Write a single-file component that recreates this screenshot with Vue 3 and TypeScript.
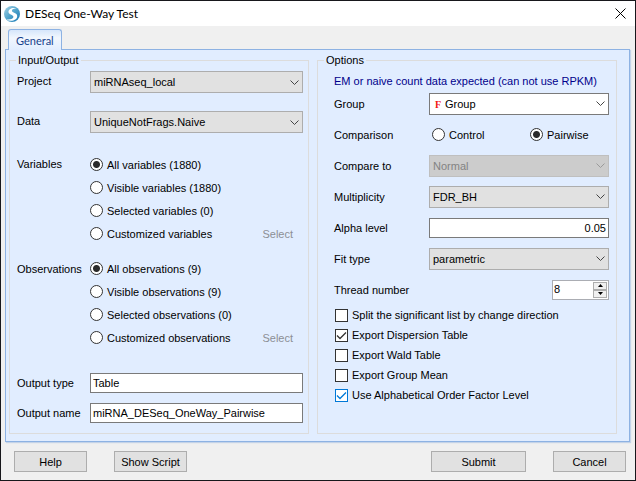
<script setup lang="ts">
import { reactive } from 'vue'

interface Choice {
  value: string
  label: string
}

const variableChoices: Choice[] = [
  { value: 'all', label: 'All variables (1880)' },
  { value: 'visible', label: 'Visible variables (1880)' },
  { value: 'selected', label: 'Selected variables (0)' },
  { value: 'custom', label: 'Customized variables' },
]

const observationChoices: Choice[] = [
  { value: 'all', label: 'All observations (9)' },
  { value: 'visible', label: 'Visible observations (9)' },
  { value: 'selected', label: 'Selected observations (0)' },
  { value: 'custom', label: 'Customized observations' },
]

const form = reactive({
  project: 'miRNAseq_local',
  data: 'UniqueNotFrags.Naive',
  variables: 'all',
  observations: 'all',
  outputType: 'Table',
  outputName: 'miRNA_DESeq_OneWay_Pairwise',
  group: 'Group',
  comparison: 'pairwise',
  compareTo: 'Normal',
  multiplicity: 'FDR_BH',
  alpha: '0.05',
  fitType: 'parametric',
  threads: 8,
})

const flags = reactive([
  { id: 'split', label: 'Split the significant list by change direction', on: false, focused: false },
  { id: 'dispersion', label: 'Export Dispersion Table', on: true, focused: false },
  { id: 'wald', label: 'Export Wald Table', on: false, focused: false },
  { id: 'mean', label: 'Export Group Mean', on: false, focused: false },
  { id: 'alphabetical', label: 'Use Alphabetical Order Factor Level', on: true, focused: true },
])

function step(delta: number) {
  form.threads = Math.max(1, form.threads + delta)
}
</script>

<template>
  <main class="window">
    <header class="titlebar">
      <svg class="logo" viewBox="0 0 16 16" aria-hidden="true">
        <defs>
          <linearGradient id="globe" x1="0" y1="0" x2="1" y2="1">
            <stop offset="0" stop-color="#a9d3e4" />
            <stop offset="0.5" stop-color="#4fa3cb" />
            <stop offset="1" stop-color="#1878b4" />
          </linearGradient>
        </defs>
        <circle cx="8" cy="8" r="8" fill="url(#globe)" />
        <path d="M13 2.500C8.500.8 4.300 2.800 4.500 6c.2 2.800 4.600 2.600 4.900 4.800.2 1.900-3 3.200-7.200 2.600 4.500 2.600 10.800 1 11-3.200.2-3.500-5.200-3.400-5.300-5.400-.1-1.600 2.200-2.500 5.100-2.300z" fill="#fff" />
      </svg>
      <h1>DESeq One-Way Test</h1>
      <button type="button" class="close" aria-label="Close">
        <svg viewBox="0 0 11 11" aria-hidden="true"><path d="M.5.5l10 10M10.500.5l-10 10" /></svg>
      </button>
    </header>

    <form class="body" @submit.prevent>
      <div class="tabs" role="tablist">
        <button type="button" role="tab" aria-selected="true" class="tab">General</button>
      </div>

      <div class="panel" role="tabpanel">
        <fieldset class="group">
          <legend>Input/Output</legend>
          <div class="fields io">
            <label for="project">Project</label>
            <div class="combo">
              <select id="project" v-model="form.project"><option>miRNAseq_local</option></select>
              <svg viewBox="0 0 9 5" aria-hidden="true"><path d="M.5.5l4 4 4-4" /></svg>
            </div>

            <label for="data">Data</label>
            <div class="combo">
              <select id="data" v-model="form.data"><option>UniqueNotFrags.Naive</option></select>
              <svg viewBox="0 0 9 5" aria-hidden="true"><path d="M.5.5l4 4 4-4" /></svg>
            </div>

            <span id="variables" class="caption">Variables</span>
            <div class="choices" role="radiogroup" aria-labelledby="variables">
              <div v-for="c in variableChoices" :key="c.value" class="choice">
                <label><input v-model="form.variables" type="radio" name="variables" :value="c.value" />{{ c.label }}</label>
                <button v-if="c.value === 'custom'" type="button" class="pick" disabled>Select</button>
              </div>
            </div>

            <span id="observations" class="caption">Observations</span>
            <div class="choices last" role="radiogroup" aria-labelledby="observations">
              <div v-for="c in observationChoices" :key="c.value" class="choice">
                <label><input v-model="form.observations" type="radio" name="observations" :value="c.value" />{{ c.label }}</label>
                <button v-if="c.value === 'custom'" type="button" class="pick" disabled>Select</button>
              </div>
            </div>

            <label for="output-type">Output type</label>
            <input id="output-type" v-model="form.outputType" class="text" type="text" />

            <label for="output-name">Output name</label>
            <input id="output-name" v-model="form.outputName" class="text" type="text" />
          </div>
        </fieldset>

        <fieldset class="group">
          <legend>Options</legend>
          <p class="note">EM or naive count data expected (can not use RPKM)</p>
          <div class="fields options">
            <label for="group">Group</label>
            <div class="combo white">
              <select id="group" v-model="form.group"><option>Group</option></select>
              <span class="factor" aria-hidden="true">F</span>
              <svg viewBox="0 0 9 5" aria-hidden="true"><path d="M.5.5l4 4 4-4" /></svg>
            </div>

            <span id="comparison">Comparison</span>
            <div class="pair" role="radiogroup" aria-labelledby="comparison">
              <label><input v-model="form.comparison" type="radio" name="comparison" value="control" />Control</label>
              <label><input v-model="form.comparison" type="radio" name="comparison" value="pairwise" />Pairwise</label>
            </div>

            <label for="compare-to">Compare to</label>
            <div class="combo off">
              <select id="compare-to" v-model="form.compareTo" disabled><option>Normal</option></select>
              <svg viewBox="0 0 9 5" aria-hidden="true"><path d="M.5.5l4 4 4-4" /></svg>
            </div>

            <label for="multiplicity">Multiplicity</label>
            <div class="combo">
              <select id="multiplicity" v-model="form.multiplicity"><option>FDR_BH</option></select>
              <svg viewBox="0 0 9 5" aria-hidden="true"><path d="M.5.5l4 4 4-4" /></svg>
            </div>

            <label for="alpha">Alpha level</label>
            <input id="alpha" v-model="form.alpha" class="text number" type="text" />

            <label for="fit-type">Fit type</label>
            <div class="combo">
              <select id="fit-type" v-model="form.fitType"><option>parametric</option></select>
              <svg viewBox="0 0 9 5" aria-hidden="true"><path d="M.5.5l4 4 4-4" /></svg>
            </div>

            <label for="threads">Thread number</label>
            <div class="spinner">
              <input id="threads" v-model.number="form.threads" type="number" min="1" />
              <div class="steps">
                <button type="button" aria-label="Increase" @click="step(1)">
                  <svg viewBox="0 0 5 3" aria-hidden="true"><path d="M0 3L2.500 0 5 3z" /></svg>
                </button>
                <button type="button" aria-label="Decrease" @click="step(-1)">
                  <svg viewBox="0 0 5 3" aria-hidden="true"><path d="M0 0L2.500 3 5 0z" /></svg>
                </button>
              </div>
            </div>
          </div>

          <div class="flags">
            <label v-for="f in flags" :key="f.id" :class="{ focused: f.focused }">
              <span class="box">
                <input v-model="f.on" type="checkbox" />
                <svg v-if="f.on" viewBox="0 0 13 13" aria-hidden="true"><path d="M2 6.500l3 3 6-6" /></svg>
              </span>
              {{ f.label }}
            </label>
          </div>
        </fieldset>
      </div>

      <footer class="actions">
        <button type="button">Help</button>
        <button type="button">Show Script</button>
        <button type="submit" class="submit">Submit</button>
        <button type="button">Cancel</button>
      </footer>
    </form>
  </main>
</template>

<style>
body {
  margin: 0;
  background: #f0f0f0;
}
</style>

<style scoped>
.window {
  box-sizing: border-box;
  min-height: 100vh;
  display: flex;
  flex-direction: column;
  border: 1px solid #17171b;
  background: #f0f0f0;
  color: #000;
  font: 11px/16px "Liberation Sans", Arial, sans-serif;
}

.window *,
.window *::before {
  box-sizing: border-box;
}

button,
input,
select {
  margin: 0;
  font: inherit;
  color: inherit;
}

.titlebar {
  display: flex;
  align-items: center;
  height: 25px;
  padding: 0 9px 0 3px;
  background: #fff;
}

.logo {
  width: 16px;
  height: 16px;
}

h1 {
  flex: 1;
  margin: 0 0 0 5px;
  font: 12px/16px Lato, "Open Sans", sans-serif;
}

.close {
  display: flex;
  padding: 0;
  border: 0;
  background: none;
}

.close svg {
  width: 11px;
  height: 11px;
  fill: none;
  stroke: #000;
}

.body {
  flex: 1;
  display: flex;
  flex-direction: column;
  padding: 3px 5px 8px 4px;
}

.tabs {
  display: flex;
  padding-left: 3px;
}

.tab {
  position: relative;
  z-index: 1;
  height: 21px;
  margin-bottom: -1px;
  padding: 1px 7px 0;
  border: 1px solid #8db2e3;
  border-bottom: 0;
  border-radius: 3px 3px 0 0;
  background: linear-gradient(#d6e6fb, #f2f7fe 40%, #e1edff);
  color: #15428b;
  font: 11px/16px Lato, "Open Sans", sans-serif;
}

.panel {
  display: flex;
  gap: 8px;
  padding: 3px 12px 7px 3px;
  border: 1px solid #8db2e3;
  background: #e1edff;
  box-shadow: 1px 1px 1px #c4d3e8;
}

.group {
  flex: 1;
  min-width: 0;
  margin: 0;
  padding: 0 5px 10px 7px;
  border: 1px solid #dcdcdc;
}

legend {
  margin-left: -1px;
  padding: 0 2px;
  line-height: 14px;
}

.fields {
  display: grid;
}

.io {
  grid-template-columns: 73px 1fr;
  padding-top: 4px;
  row-gap: 10px;
}

.io > label {
  line-height: 20px;
}

.io > .combo {
  margin-bottom: 8px;
}

.choices {
  margin: 2px 0 1px;
}

.choices.last {
  margin: 1px 0 14px;
}

.caption {
  line-height: 27px;
}

.choice {
  display: flex;
  align-items: center;
  justify-content: space-between;
  height: 23px;
}

.choice label,
.pair label {
  display: flex;
  align-items: center;
  gap: 4px;
}

.pick {
  padding: 0 10px;
  border: 0;
  background: none;
  color: #8c8f95;
}

.combo {
  display: grid;
  grid-template-columns: 1fr 9px 4px;
  align-items: center;
  height: 22px;
}

.combo select {
  grid-area: 1 / 1 / 2 / 4;
  width: 100%;
  height: 22px;
  padding: 0 20px 0 3px;
  appearance: none;
  border: 1px solid #adadad;
  border-radius: 0;
  background: #e1e1e1;
}

.combo svg {
  grid-area: 1 / 2;
  width: 9px;
  height: 5px;
  fill: none;
  stroke: #444;
  pointer-events: none;
}

.combo.white select {
  padding-left: 15px;
  border-color: #7a7a7a;
  background: #fff;
}

.factor {
  grid-area: 1 / 1;
  padding: 2px 0 0 6px;
  color: #f21414;
  font: bold 10px/10px "Liberation Serif", serif;
  pointer-events: none;
}

.combo.off select {
  border-color: #bfbfbf;
  background: #ccc;
  color: #838383;
  opacity: 1;
}

.combo.off svg {
  stroke: #9a9a9a;
}

.text {
  width: 100%;
  height: 20px;
  padding: 0 2px;
  border: 1px solid #7a7a7a;
  background: #fff;
}

.number {
  text-align: right;
}

input[type="radio"] {
  width: 13px;
  height: 13px;
  appearance: none;
  border: 1px solid #333;
  border-radius: 50%;
  background: #fff;
}

input[type="radio"]:checked {
  background: radial-gradient(circle, #2b2b2b 3px, #fff 4px);
}

.note {
  height: 21px;
  margin: 0;
  padding: 6px 0 0 9px;
  color: #00008b;
  white-space: nowrap;
}

.options {
  grid-template-columns: 95px 1fr;
  grid-auto-rows: 31px;
  align-items: center;
  padding: 0 2px 0 9px;
}

.pair {
  display: grid;
  grid-template-columns: 98px 1fr;
  padding-left: 3px;
}

.spinner {
  display: flex;
  justify-self: end;
  width: 57px;
  height: 20px;
  padding: 1px;
  border: 1px solid #abadb3;
  background: #fff;
}

.spinner input {
  flex: 1;
  width: 0;
  min-width: 0;
  padding: 0 0 2px;
  border: 0;
  background: none;
  appearance: textfield;
}

.spinner input::-webkit-inner-spin-button {
  appearance: none;
}

.steps {
  display: grid;
  grid-template-rows: 8px 8px;
  width: 14px;
}

.steps button {
  display: flex;
  align-items: center;
  justify-content: center;
  padding: 0;
  border: 1px solid #adadad;
  background: #f0f0f0;
}

.steps svg {
  width: 5px;
  height: 3px;
}

.flags {
  padding-left: 10px;
}

.flags label {
  display: flex;
  align-items: center;
  gap: 4px;
  height: 20px;
}

.box {
  display: grid;
  width: 13px;
  height: 13px;
}

.box input {
  grid-area: 1 / 1;
  width: 13px;
  height: 13px;
  appearance: none;
  border: 1px solid #333;
  background: #fff;
}

.box svg {
  grid-area: 1 / 1;
  z-index: 1;
  fill: none;
  stroke: #333;
  stroke-width: 1.3;
  pointer-events: none;
}

.focused .box input {
  border-color: #0078d7;
}

.focused .box svg {
  stroke: #0078d7;
}

.actions {
  display: flex;
  gap: 27px;
  padding: 9px 4px 0 9px;
}

.actions button {
  width: 73px;
  height: 21px;
  padding: 0;
  border: 1px solid #adadad;
  background: #e1e1e1;
}

.actions .submit {
  width: 95px;
  margin-left: auto;
}
</style>
